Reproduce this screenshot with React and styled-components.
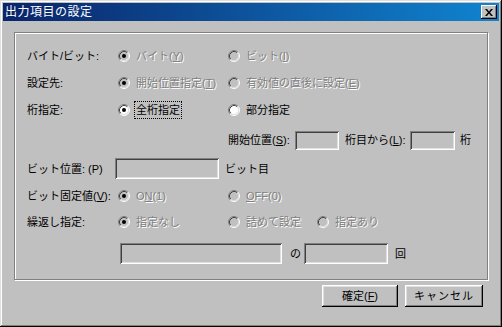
import React from 'react';
import styled, {createGlobalStyle} from 'styled-components';

const Global = createGlobalStyle`
html, body {
    margin: 0;
    padding: 0;
    background: #c0c0c0;
}
body {
    width: 502px;
    height: 327px;
    overflow: hidden;
}
`;

const Window = styled.div`
width: 502px;
height: 327px;
box-sizing: border-box;
padding: 3px;
background: #c0c0c0;
box-shadow: inset -1px -1px #000, inset 1px 1px #dfdfdf, inset -2px -2px #808080, inset 2px 2px #fff;
display: flex;
flex-direction: column;
font-family: "Liberation Sans", "Noto Sans CJK JP", sans-serif;
font-size: 11px;
line-height: 14px;
color: #000;
`;

const TitleBar = styled.div`
height: 18px;
display: flex;
align-items: center;
justify-content: space-between;
padding: 0 2px 0 2px;
background: linear-gradient(to right, #0a246a, #1084d0);
`;

const Title = styled.span`
color: #fff;
font-size: 12px;
letter-spacing: 0.5px;
`;

const CloseButton = styled.div`
width: 16px;
height: 14px;
box-sizing: border-box;
background: #c0c0c0;
box-shadow: inset -1px -1px #000, inset 1px 1px #fff, inset -2px -2px #808080;
display: flex;
align-items: center;
justify-content: center;
`;

const Body = styled.div`
padding: 11px 11px 0 11px;
display: flex;
flex-direction: column;
`;

const Group = styled.div`
height: 248px;
box-sizing: border-box;
border: 1px solid #808080;
box-shadow: inset 1px 1px 0 #fff, 1px 1px 0 #fff;
padding: 13px 12px 0 12px;
`;

const Row = styled.div`
display: flex;
align-items: center;
height: ${(props) => props.h || 20}px;
margin-top: ${(props) => props.mt || 0}px;
padding-left: ${(props) => props.indent || 0}px;
`;

const Label = styled.span`
width: 91px;
flex-shrink: 0;
white-space: nowrap;
`;

const Option = styled.label`
display: flex;
align-items: center;
gap: 6px;
width: ${(props) => props.w || 110}px;
flex-shrink: 0;
white-space: nowrap;
color: ${(props) => (props.disabled ? "#808080" : "#000")};
text-shadow: ${(props) => (props.disabled ? "1px 1px 0 #fff" : "none")};
`;

const Text = styled.span`
white-space: nowrap;
width: ${(props) => (props.w ? `${props.w}px` : "auto")};
margin-left: ${(props) => props.ml || 0}px;
flex-shrink: 0;
`;

const Focus = styled.span`
outline: 1px dotted #000;
outline-offset: 1px;
`;

const U = styled.span`
text-decoration: underline;
`;

const Field = styled.div`
width: ${(props) => props.w}px;
height: ${(props) => props.h || 19}px;
box-sizing: border-box;
background: #c0c0c0;
box-shadow: inset 1px 1px #808080, inset -1px -1px #fff, inset 2px 2px #404040, inset -2px -2px #dfdfdf;
margin-left: ${(props) => props.ml || 0}px;
flex-shrink: 0;
`;

const ButtonRow = styled.div`
display: flex;
justify-content: flex-end;
gap: 7px;
margin-top: 5px;
padding-right: 5px;
`;

const Button = styled.div`
width: ${(props) => props.w}px;
height: 22px;
box-sizing: border-box;
background: #c0c0c0;
box-shadow: inset -1px -1px #000, inset 1px 1px #fff, inset -2px -2px #808080, inset 2px 2px #dfdfdf;
display: flex;
align-items: center;
justify-content: center;
letter-spacing: ${(props) => props.ls || 0}px;
`;

const Radio = ({checked, disabled}) => (
    <svg width="12" height="12" viewBox="0 0 12 12" style={{flexShrink: 0}}>
        <circle cx="6" cy="6" r="5" fill={disabled ? "#c0c0c0" : "#fff"} />
        <path d="M2.11 9.89 A5.5 5.5 0 0 1 9.89 2.11" fill="none" stroke="#808080" />
        <path d="M9.89 2.11 A5.5 5.5 0 0 1 2.11 9.89" fill="none" stroke="#fff" />
        <path d="M2.82 9.18 A4.5 4.5 0 0 1 9.18 2.82" fill="none" stroke="#404040" />
        <path d="M9.18 2.82 A4.5 4.5 0 0 1 2.82 9.18" fill="none" stroke="#dfdfdf" />
        {checked && <circle cx="6" cy="6" r="2" fill="#000" />}
    </svg>
);

const CloseGlyph = () => (
    <svg width="8" height="7" viewBox="0 0 8 7">
        <path d="M0 0h2l2 2.5L6 0h2L5 3.5L8 7H6L4 4.5L2 7H0l3-3.5z" fill="#000" />
    </svg>
);

const App = () => {
    return (
        <>
        <Global />
        <Window>
            <TitleBar>
                <Title>出力項目の設定</Title>
                <CloseButton><CloseGlyph /></CloseButton>
            </TitleBar>
            <Body>
                <Group>
                    <Row>
                        <Label>バイト/ビット:</Label>
                        <Option disabled><Radio checked disabled /><span>バイト(<U>Y</U>)</span></Option>
                        <Option disabled><Radio disabled /><span>ビット(<U>I</U>)</span></Option>
                    </Row>
                    <Row mt={7}>
                        <Label>設定先:</Label>
                        <Option disabled><Radio checked disabled /><span>開始位置指定(<U>T</U>)</span></Option>
                        <Option disabled w={160}><Radio disabled /><span>有効値の直後に設定(<U>E</U>)</span></Option>
                    </Row>
                    <Row mt={7}>
                        <Label>桁指定:</Label>
                        <Option><Radio checked /><Focus>全桁指定</Focus></Option>
                        <Option><Radio /><span>部分指定</span></Option>
                    </Row>
                    <Row mt={10} indent={201}>
                        <Text w={67}>開始位置(<U>S</U>):</Text>
                        <Field w={44} />
                        <Text ml={6} w={65}>桁目から(<U>L</U>):</Text>
                        <Field w={45} />
                        <Text ml={5}>桁</Text>
                    </Row>
                    <Row mt={8} h={21}>
                        <Text w={88}>ビット位置: (P)</Text>
                        <Field w={104} h={21} />
                        <Text ml={6}>ビット目</Text>
                    </Row>
                    <Row mt={7}>
                        <Label>ビット固定値(<U>V</U>):</Label>
                        <Option disabled><Radio checked disabled /><span>O<U>N</U>(1)</span></Option>
                        <Option disabled><Radio disabled /><span><U>O</U>FF(0)</span></Option>
                    </Row>
                    <Row mt={6}>
                        <Label>繰返し指定:</Label>
                        <Option disabled><Radio checked disabled /><span>指定なし</span></Option>
                        <Option disabled w={89}><Radio disabled /><span>詰めて設定</span></Option>
                        <Option disabled w={80}><Radio disabled /><span>指定あり</span></Option>
                    </Row>
                    <Row mt={11} h={21} indent={93}>
                        <Field w={162} h={21} />
                        <Text ml={8} w={14}>の</Text>
                        <Field w={84} h={21} />
                        <Text ml={7}>回</Text>
                    </Row>
                </Group>
                <ButtonRow>
                    <Button w={76}><span>確定(<U>F</U>)</span></Button>
                    <Button w={78} ls={1}>キャンセル</Button>
                </ButtonRow>
            </Body>
        </Window>
        </>
    );
}

export default App;
